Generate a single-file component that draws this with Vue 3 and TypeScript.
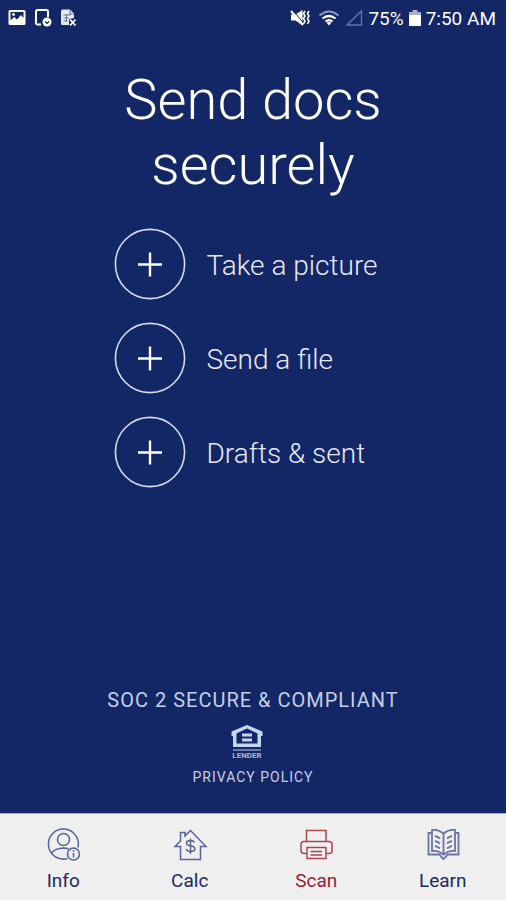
<script setup lang="ts">
import { ref } from 'vue'

type TabId = 'info' | 'calc' | 'scan' | 'learn'

const actions: string[] = ['Take a picture', 'Send a file', 'Drafts & sent']

const tabs: { id: TabId; label: string }[] = [
  { id: 'info', label: 'Info' },
  { id: 'calc', label: 'Calc' },
  { id: 'scan', label: 'Scan' },
  { id: 'learn', label: 'Learn' },
]

const current = ref<TabId>('scan')
</script>

<template>
  <div class="screen">
    <header class="status">
      <div class="status-group">
        <svg class="note-icon" viewBox="0 0 18 18" aria-hidden="true">
          <path fill="#fff" fill-rule="evenodd" d="M2 1h14a1.500 1.500 0 0 1 1.500 1.500v12A1.500 1.500 0 0 1 16 16H2a1.500 1.500 0 0 1-1.500-1.500v-12A1.500 1.500 0 0 1 2 1zM2.500 3v8.500L6 8l3 2.500L13 6l2.500 3V3z" />
          <circle cx="5.500" cy="5.500" r="1.400" fill="#fff" />
        </svg>
        <svg class="note-icon" viewBox="0 0 18 18" aria-hidden="true">
          <path fill="none" stroke="#fff" stroke-width="2" stroke-linejoin="round" d="M7 15.500H3.500A1.500 1.500 0 0 1 2 14V2.500A1.500 1.500 0 0 1 3.500 1H12.500A1.500 1.500 0 0 1 14 2.500V8" />
          <circle cx="13" cy="13" r="4.500" fill="#fff" />
          <path fill="none" stroke="#132666" stroke-width="1.200" d="M11 12.500l2 2 2-2" />
        </svg>
        <svg class="note-icon" viewBox="0 0 18 18" aria-hidden="true">
          <path fill="#e8ebf4" d="M2.500 0.500H10L14 4.500V9L9 10v6H2.500A1.500 1.500 0 0 1 1 14.500V2A1.500 1.500 0 0 1 2.500 0.500z" />
          <path fill="none" stroke="#68749f" stroke-width="1.200" d="M3.500 6h7M3.500 9h5M3.500 12h4M6.500 5v8M10 1v4h4" />
          <path stroke="#fff" stroke-width="1.800" d="M10 10.500l5.500 6M15.500 10.500l-5.500 6" />
        </svg>
      </div>
      <div class="status-group status-right">
        <svg class="mute-icon" viewBox="0 0 20 18" aria-hidden="true">
          <path fill="#fff" d="M1 5.500h4.500l7-4.500v15.500l-7-5H1z" />
          <path stroke="#132666" stroke-width="1" d="M2.500 1l11.500 13.500" />
          <path stroke="#fff" stroke-width="2" d="M1 2l12 14" />
          <path fill="none" stroke="#fff" stroke-width="1.600" d="M15 2l-1.500 2.500L15 7l-1.500 2.500L15 12l-1.500 3M19 2l-1.500 2.500L19 7l-1.500 2.500L19 12l-1.500 3" />
        </svg>
        <svg class="wifi-icon" viewBox="0 0 22 18" aria-hidden="true">
          <path fill="none" stroke="#8c97bd" stroke-width="2" d="M1.500 6.500Q11-1.500 20.500 6.500" />
          <path fill="none" stroke="#fff" stroke-width="2.200" d="M4.500 9.500q6.500-5 13 0M7.500 12.500q3.500-2.800 7 0" />
          <path fill="#fff" d="M8.500 13.500q2.500-1.600 5 0L11 16.500z" />
        </svg>
        <svg class="signal-icon" viewBox="0 0 18 18" aria-hidden="true">
          <path fill="none" stroke="#66739f" stroke-width="1.400" d="M2 16L16.500 2v14z" />
        </svg>
        <span>75%</span>
        <svg class="battery-icon" viewBox="0 0 12 18" aria-hidden="true">
          <path fill="#a9b0cc" d="M3.500 1h5v2H12v4H0V3h3.500z" />
          <path fill="#fff" d="M0 6h12v11H0z" />
        </svg>
        <time>7:50 AM</time>
      </div>
    </header>

    <main class="content">
      <h1 class="title">Send docs securely</h1>
      <div class="actions">
        <button v-for="action in actions" :key="action" class="action" type="button">
          <svg class="plus" viewBox="0 0 72 72" aria-hidden="true">
            <circle cx="36" cy="36" r="34.600" fill="none" stroke="#d6daec" stroke-width="1.600" />
            <path stroke="#fff" stroke-width="2.400" d="M24 36.500h24M36 24.500v24" />
          </svg>
          <span class="action-label">{{ action }}</span>
        </button>
      </div>

      <footer class="legal">
        <p class="compliance">SOC 2 SECURE &amp; COMPLIANT</p>
        <svg class="lender" viewBox="0 0 32 34" role="img" aria-label="Equal housing lender">
          <path fill="#c3d6ee" fill-rule="evenodd" d="M16 0L31.500 6.500v4.500H30v11H2V11H0.500V6.500zM16 3.500L5.500 8.500V18.500h21V8.500z" />
          <path fill="#c3d6ee" d="M11 8.500h10v3H11zM11 13.500h10v3H11z" />
          <text x="16" y="33" text-anchor="middle" class="lender-word">LENDER</text>
          <path stroke="#8c9bc2" stroke-width="1.500" d="M2 25h28" />
        </svg>
        <a class="privacy" href="#privacy">PRIVACY POLICY</a>
      </footer>
    </main>

    <nav class="tabs" aria-label="Main">
      <button
        v-for="tab in tabs"
        :key="tab.id"
        type="button"
        class="tab"
        :class="{ active: current === tab.id }"
        :aria-current="current === tab.id ? 'page' : undefined"
        @click="current = tab.id"
      >
        <svg class="tab-icon" viewBox="0 0 36 36" aria-hidden="true">
          <g v-if="tab.id === 'info'">
            <path d="M22.500 31.500A15 15 0 1 1 33 20.500" />
            <circle cx="18.500" cy="12.500" r="6" />
            <path d="M7 25.500Q10 21.500 18.500 21q3 0 5 1" />
            <circle cx="28.500" cy="27" r="6" />
            <path d="M28.500 26v4.500M28.500 23v1.700" />
          </g>
          <g v-else-if="tab.id === 'calc'">
            <path d="M8.500 19.500H3L8.500 14V5.500h4.500V9L18.500 3.500l15.500 16H28.500v13H8.500z" />
            <path d="M22.500 15.500q-1-2-4-2-4 0-4 2.500 0 2 4 2.800 4.500.8 4.500 3 0 2.700-4.500 2.700-3.500 0-4.500-2.500M18.500 11.500v15.500" />
          </g>
          <g v-else-if="tab.id === 'scan'">
            <path d="M8.500 14.500V3.500H28v11" />
            <path d="M8.500 26.500H6q-3 0-3-3V17.500q0-3 3-3H31q3 0 3 3v6q0 3-3 3h-2.500" />
            <path d="M9 20.500h19v11H9zM12.500 24.500h11.500M12.500 28h11.500" />
          </g>
          <g v-else class="book">
            <path d="M18.500 6.500Q13 2 7 3v21q6-1 11.500 3.500Q24 23 30 24V3Q24 2 18.500 6.500zM18.500 6.500v21" />
            <path d="M7 6H3.500v21.500H14.500Q15.500 29.500 18.500 32q3-2.500 4-4.500H33.500V6H30" />
            <path d="M10 9q2.500.5 5 2.500M10 14q2.500.5 5 2.500M10 19q2.500.5 5 2.500M27 9q-2.500.5-5 2.500M27 14q-2.500.5-5 2.500M27 19q-2.500.5-5 2.500" />
          </g>
        </svg>
        <span>{{ tab.label }}</span>
      </button>
    </nav>
  </div>
</template>

<style>
body {
  margin: 0;
  background: #132666;
}
</style>

<style scoped>
.screen {
  display: flex;
  flex-direction: column;
  min-height: 100vh;
  background: #132666;
  color: #fff;
  font-family: Roboto, "Liberation Sans", sans-serif;
}

button {
  padding: 0;
  border: 0;
  background: none;
  font: inherit;
  cursor: pointer;
}

.status {
  display: flex;
  align-items: center;
  justify-content: space-between;
  height: 36px;
  padding: 0 10px 0 8px;
  font-size: 19px;
}

.status-group {
  display: flex;
  align-items: center;
  gap: 8px;
}

.status-right {
  gap: 5px;
}

.note-icon,
.signal-icon {
  width: 18px;
  height: 18px;
}

.mute-icon {
  width: 20px;
  height: 18px;
  margin-right: 3px;
}

.wifi-icon {
  width: 22px;
  height: 18px;
}

.battery-icon {
  width: 12px;
  height: 18px;
}

.content {
  display: flex;
  flex: 1;
  flex-direction: column;
  align-items: center;
  padding: 32px 24px 28px;
}

.title {
  max-width: 320px;
  margin: 0;
  font-size: 56px;
  font-weight: 300;
  line-height: 65px;
  text-align: center;
}

.actions {
  display: flex;
  flex-direction: column;
  gap: 22px;
  margin-top: 30px;
  padding-right: 14px;
}

.action {
  display: flex;
  align-items: center;
  gap: 20px;
  color: #e6e9f4;
  font-size: 28px;
  font-weight: 300;
  line-height: 36px;
}

.action-label {
  padding-top: 4px;
}

.plus {
  width: 72px;
  height: 72px;
}

.legal {
  display: flex;
  flex-direction: column;
  align-items: center;
  margin-top: auto;
  color: #c3d0e8;
}

.compliance {
  margin: 0;
  font-size: 20px;
  line-height: 24px;
  letter-spacing: 1px;
}

.lender {
  width: 32px;
  height: 34px;
  margin: 13px 12px 10px 0;
}

.lender-word {
  fill: #a9badb;
  font-size: 8px;
  font-weight: 700;
}

.privacy {
  color: inherit;
  font-size: 14px;
  line-height: 16px;
  letter-spacing: 1px;
  text-decoration: none;
}

.tabs {
  display: grid;
  grid-template-columns: repeat(4, 1fr);
  border-top: 1px solid #a5abc4;
  background: #efeff0;
}

.tab {
  display: flex;
  flex-direction: column;
  align-items: center;
  gap: 6px;
  padding: 13px 0 7px;
  color: #1d2866;
  font-size: 19px;
  line-height: 24px;
}

.active {
  color: #98202f;
}

.tab-icon {
  width: 36px;
  height: 36px;
  fill: none;
  stroke: #55639a;
  stroke-width: 1.5;
}

.active .tab-icon {
  stroke: #aa4550;
}

.book {
  stroke: #6874a4;
  stroke-width: 1.8;
}
</style>
